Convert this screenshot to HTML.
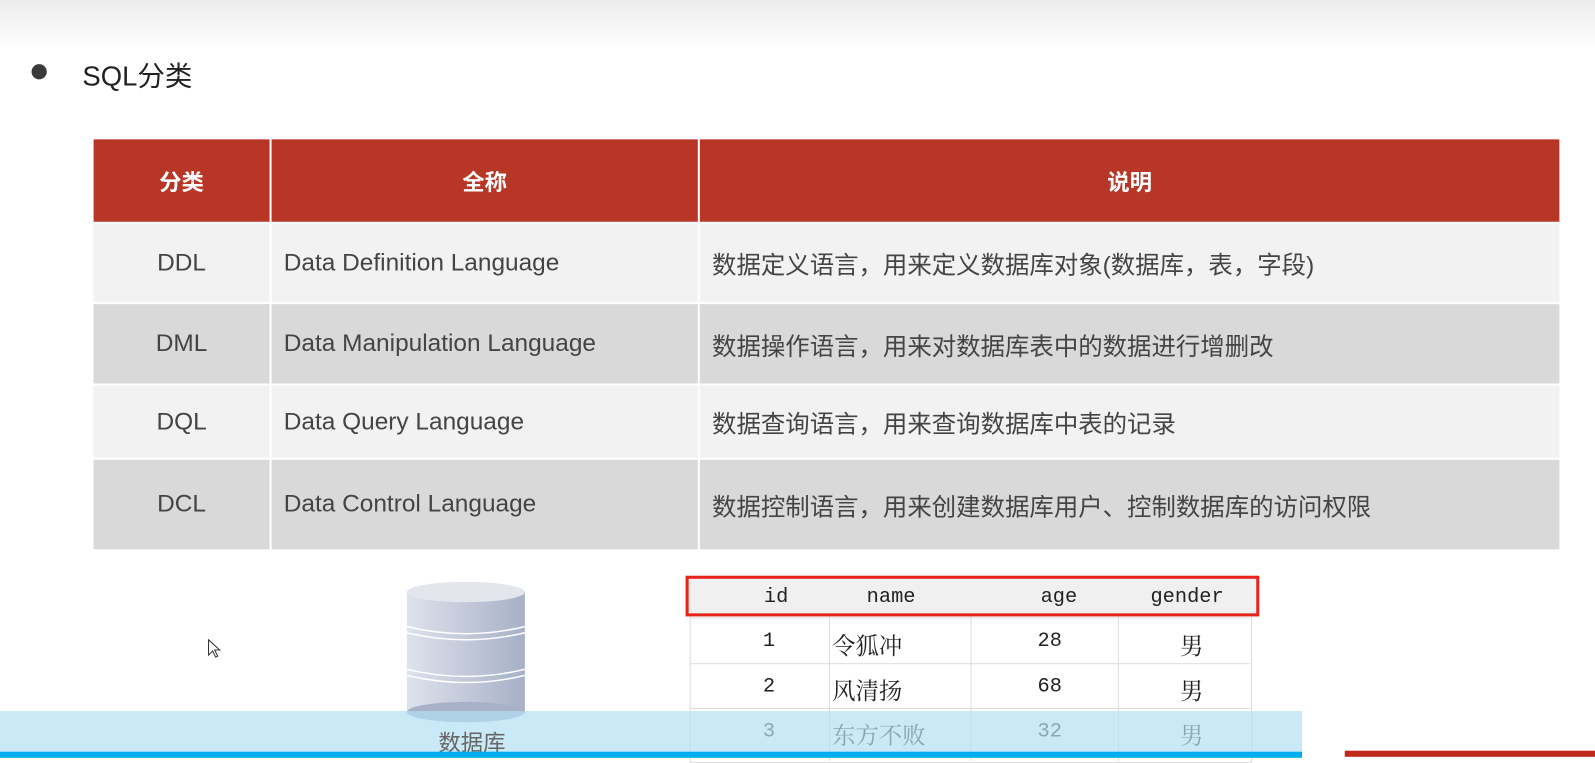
<!DOCTYPE html>
<html><head><meta charset="utf-8"><style>
body{margin:0;width:1595px;height:755px;overflow:hidden;background:#fff;position:relative;font-family:"Liberation Sans","Noto Sans CJK SC",sans-serif;}
#w{position:absolute;left:0;top:0;width:1568px;height:742px;transform:scale(1.0172);transform-origin:0 0;}
.top{position:absolute;left:0;top:0;width:1568px;height:48px;background:linear-gradient(#ececec,#fff);}
.t{position:absolute;color:#222;}
table{position:absolute;left:90px;top:135px;border-collapse:collapse;width:1445px;}
td,th{border:2px solid #fff;font-size:24px;color:#444;padding:0;}
th{background:#b83625;color:#fff;font-weight:bold;height:81px;font-size:22px;}
td.c{text-align:center;}
td.l{padding-left:12px;}
.r1 td{background:#f2f2f2}
.r2 td{background:#d9d9d9}
.m{position:absolute;font-family:"Liberation Mono","Noto Serif CJK SC",monospace;font-size:20px;color:#222;}
</style></head><body><div id="w">
<div class="top"></div>
<div style="position:absolute;left:31px;top:63px;width:15px;height:15px;border-radius:50%;background:#3a3a3a"></div>
<div class="t" style="left:81px;top:53px;font-size:27px;">SQL分类</div>
<table>
<tr><th style="width:173px">分类</th><th style="width:419px">全称</th><th>说明</th></tr>
<tr class="r1" style="height:79px"><td class="c">DDL</td><td class="l">Data Definition Language</td><td class="l">数据定义语言，用来定义数据库对象(数据库，表，字段)</td></tr>
<tr class="r2" style="height:80px"><td class="c">DML</td><td class="l">Data Manipulation Language</td><td class="l">数据操作语言，用来对数据库表中的数据进行增删改</td></tr>
<tr class="r1" style="height:73px"><td class="c">DQL</td><td class="l">Data Query Language</td><td class="l">数据查询语言，用来查询数据库中表的记录</td></tr>
<tr class="r2" style="height:90px"><td class="c">DCL</td><td class="l">Data Control Language</td><td class="l">数据控制语言，用来创建数据库用户、控制数据库的访问权限</td></tr>
</table>
<svg style="position:absolute;left:398px;top:572px" width="120" height="140">
<defs><linearGradient id="g" x1="0" x2="1"><stop offset="0" stop-color="#dfe2ec"/><stop offset="1" stop-color="#a7b0c8"/></linearGradient></defs>
<rect x="2" y="10" width="116" height="118" fill="url(#g)"/>
<ellipse cx="60" cy="128" rx="58" ry="10" fill="#a9b1c8"/>
<ellipse cx="60" cy="10" rx="58" ry="10" fill="#e4e6ee"/>
<path d="M2 44 Q60 58 118 44 M2 50 Q60 64 118 50 M2 86 Q60 100 118 86 M2 92 Q60 106 118 92" stroke="#fff" fill="none" stroke-width="1.5"/>
</svg>
<div style="position:absolute;left:678px;top:568px;width:551px;height:180px;border:1px solid #ddd;"></div>
<div style="position:absolute;left:678px;top:607px;width:551px;height:1px;background:#ddd"></div>
<div style="position:absolute;left:678px;top:652px;width:551px;height:1px;background:#ddd"></div>
<div style="position:absolute;left:678px;top:696px;width:551px;height:1px;background:#ddd"></div>
<div style="position:absolute;left:815px;top:568px;width:1px;height:180px;background:#ddd"></div>
<div style="position:absolute;left:954px;top:568px;width:1px;height:180px;background:#ddd"></div>
<div style="position:absolute;left:1099px;top:568px;width:1px;height:180px;background:#ddd"></div>
<div style="position:absolute;left:674px;top:566px;width:558px;height:34px;background:#f0f0f0;border:3px solid #e8231a;"></div>
<div class="m" style="left:751px;top:576px">id</div>
<div class="m" style="left:852px;top:576px">name</div>
<div class="m" style="left:1023px;top:576px">age</div>
<div class="m" style="left:1131px;top:576px">gender</div>
<div class="m" style="left:750px;top:619px">1</div><div class="m" style="left:818px;top:617px;font-size:23px">令狐冲</div><div class="m" style="left:1020px;top:619px">28</div><div class="m" style="left:1160px;top:617px;font-size:23px">男</div>
<div class="m" style="left:750px;top:664px">2</div><div class="m" style="left:818px;top:661px;font-size:23px">风清扬</div><div class="m" style="left:1020px;top:664px">68</div><div class="m" style="left:1160px;top:661px;font-size:23px">男</div>
<div class="m" style="left:750px;top:708px">3</div><div class="m" style="left:818px;top:705px;font-size:23px">东方不败</div><div class="m" style="left:1020px;top:708px">32</div><div class="m" style="left:1160px;top:705px;font-size:23px">男</div>
<div style="position:absolute;left:0;top:699px;width:1280px;height:41px;background:rgba(178,224,244,0.7)"></div>
<div class="t" style="left:431px;top:713px;font-size:22px;color:#666">数据库</div>
<div style="position:absolute;left:0;top:739px;width:1280px;height:6px;background:#00aef0"></div>
<div style="position:absolute;left:1322px;top:738px;width:273px;height:6px;background:#c0281c"></div>
<svg style="position:absolute;left:204px;top:628px" width="14" height="20"><path d="M1 1 L1 16 L5 12 L8 18 L10 17 L7 11 L12 11 Z" fill="#fff" stroke="#333"/></svg>
</div></body></html>
